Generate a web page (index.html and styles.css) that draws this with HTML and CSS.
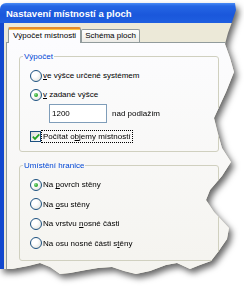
FILE: index.html
```html
<!DOCTYPE html>
<html>
<head>
  <meta charset="UTF-8">
  <title>Nastavení místností a ploch</title>
  <link rel="stylesheet" href="styles.css">
</head>
<body>
  <div class="shadow">
    <div class="window">
      <div class="titlebar">Nastavení místností a ploch</div>

      <div class="frame">
        <div class="tabs">
          <div class="tab active">Výpočet místnosti</div>
          <div class="tab">Schéma ploch</div>
        </div>

        <div class="panel">
          <fieldset class="group">
            <legend>Výpočet</legend>
            <div class="rows first">
              <div class="row"><span class="radio"></span><span><u>v</u>e výšce určené systémem</span></div>
              <div class="row"><span class="radio checked"></span><span><u>v</u> zadané výšce</span></div>
              <div class="row">
                <input class="field" type="text" value="1200">
                <span class="unit">nad podlažím</span>
              </div>
              <div class="row check-row">
                <span class="check">
                  <svg width="8" height="8" viewBox="0 0 8 8"><path d="M0.8 3.6 L3 5.9 L7.3 1.4" fill="none" stroke="#21a121" stroke-width="1.7"/></svg>
                </span>
                <span class="focus">Počítat o<u>b</u>jemy místností</span>
              </div>
            </div>
          </fieldset>

          <fieldset class="group second">
            <legend>Umístění hranice</legend>
            <div class="rows">
              <div class="row tall"><span class="radio checked"></span><span>Na <u>p</u>ovrch stěny</span></div>
              <div class="row tall"><span class="radio"></span><span>Na <u>o</u>su stěny</span></div>
              <div class="row tall"><span class="radio"></span><span>Na vrstvu <u>n</u>osné části</span></div>
              <div class="row tall"><span class="radio"></span><span>Na osu nosné části s<u>t</u>ěny</span></div>
            </div>
          </fieldset>
        </div>
      </div>
    </div>
  </div>
</body>
</html>
```

FILE: styles.css
```css
body {
  margin: 0;
  background-color: #ffffff;
  font-family: "Liberation Sans", Arial, sans-serif;
  font-size: 8px;
  color: #000;
}

/* torn paper look: shadow on the wrapper, tear on the window */
.shadow {
  width: 244px;
  height: 286px;
  filter: drop-shadow(3px 4px 3px rgba(0, 0, 0, 0.6));
}

.window {
  margin-top: 3px;
  width: 244px;
  height: 283px;
  display: flex;
  flex-direction: column;
  clip-path: polygon(0 0, 235px 0, 236px 7px, 232px 19px, 228px 30px, 225px 41px, 230px 55px, 234px 69px, 226px 89px, 214px 115px, 218px 131px, 222px 145px, 231px 159px, 222px 173px, 210px 187px, 206px 197px, 214px 209px, 229px 225px, 227px 236px, 218px 249px, 211px 258px, 200px 262px, 190px 266px, 177px 260px, 166px 262px, 150px 268px, 136px 271px, 124px 268px, 112px 264px, 98px 265px, 86px 267px, 70px 270px, 60px 271px, 50px 264px, 40px 260px, 28px 263px, 12px 266px, 0 266px);
}

.titlebar {
  height: 20px;
  line-height: 21px;
  padding-left: 6px;
  border-radius: 6px 6px 0 0;
  background: linear-gradient(#4a8cf6 0, #2566e4 3px, #1a57db 12px, #1f5fe0 100%);
  color: #fff;
  font-weight: bold;
  font-size: 9.5px;
}

.frame {
  flex: 1;
  display: flex;
  flex-direction: column;
  padding: 4px 0 0 2px;
  border-left: 4px solid #1248ce;
  background-color: #ece9d8;
}

.tabs {
  display: flex;
  align-items: flex-end;
  padding-left: 2px;
}

.tab {
  height: 12px;
  line-height: 12px;
  padding: 0 3px;
  border: 1px solid #919b9c;
  border-bottom: none;
  border-radius: 2px 2px 0 0;
  background: linear-gradient(#ffffff, #ecebe6);
}

.tab.active {
  position: relative;
  z-index: 1;
  height: 14px;
  line-height: 14px;
  margin-bottom: -1px;
  padding: 0 4px;
  border-top: 2px solid #e68b2c;
  box-shadow: inset 0 1px 0 #ffc73c;
  background: #fcfcfe;
}

.panel {
  flex: 1;
  padding: 8px 0 0 12px;
  border: 1px solid #919b9c;
  background: linear-gradient(#fcfcfe, #f4f3ee);
}

.group {
  width: 200px;
  box-sizing: border-box;
  margin: 0;
  padding: 0;
  border: 1px solid #d0d0bf;
  border-radius: 3px;
}

.group legend {
  margin-left: 3px;
  padding: 0 1px;
  line-height: 11px;
  color: #0046d5;
}

.group.second {
  margin-top: 8px;
}

.rows {
  padding: 4px 0 7px 10px;
}

.rows.first {
  padding-bottom: 5px;
}

.row {
  height: 19px;
  display: flex;
  align-items: center;
}

.row.tall {
  height: 19.5px;
}

.check-row {
  margin-top: 4px;
}

.radio {
  width: 10px;
  height: 10px;
  margin-right: 1px;
  border: 1px solid #1c5180;
  border-radius: 50%;
  background: radial-gradient(circle at 35% 35%, #ffffff 30%, #dcdcd5 100%);
  display: flex;
  align-items: center;
  justify-content: center;
}

.radio.checked::after {
  content: "";
  width: 4px;
  height: 4px;
  border-radius: 50%;
  background: radial-gradient(circle at 35% 35%, #8fe08f, #21a121 70%);
}

.field {
  width: 58px;
  height: 19px;
  box-sizing: border-box;
  margin: 0 0 0 19px;
  padding: 0 2px;
  border: 1px solid #7f9db9;
  background: #fff;
  font-family: inherit;
  font-size: 8px;
  color: #000;
}

.unit {
  margin-left: 5px;
}

.check {
  width: 9px;
  height: 9px;
  margin-right: 1px;
  border: 1px solid #1c5180;
  background: linear-gradient(135deg, #dcdcd7, #ffffff);
  display: flex;
  align-items: center;
  justify-content: center;
}

.focus {
  padding: 1px 1px;
  outline: 1px dotted #000;
}
```
